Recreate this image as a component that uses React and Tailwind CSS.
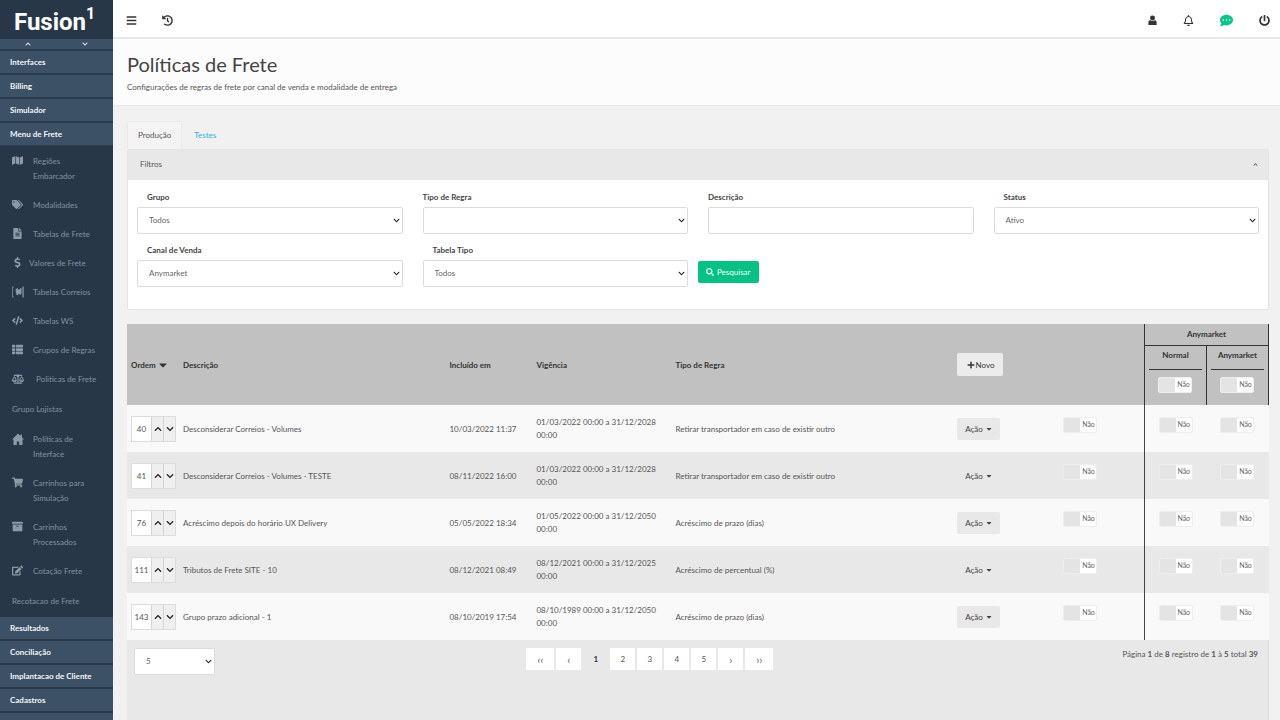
import React, { useState } from "react";
import {
  FaArchive,
  FaBalanceScale,
  FaBars,
  FaCaretDown,
  FaChevronDown,
  FaChevronUp,
  FaCode,
  FaCommentDots,
  FaDollarSign,
  FaEdit,
  FaFileAlt,
  FaHistory,
  FaMap,
  FaPlus,
  FaPowerOff,
  FaRegBell,
  FaSearch,
  FaShoppingCart,
  FaTags,
  FaThList,
} from "react-icons/fa";

const CorreiosIcon = () => (
  <svg viewBox="0 0 12 12" className="h-3 w-3" fill="currentColor">
    <path d="M0 0.5h2v1H1v9h1v1H0z" opacity="0.7" />
    <path d="M3.5 3.5l2-1.5 1.2 2 2-2 0.8 0.5v5l-1.5 1.5-1.2-1.5-1 2-1.5-1z" />
    <path d="M10.4 0.5h1.3v11h-1.3z" />
  </svg>
);

const HomeIcon = () => (
  <svg viewBox="0 0 12 12" className="h-3 w-3" fill="currentColor">
    <path d="M6 0.500L8.500 3V1.500h1.500v3L12 6.600h-1.500V12H7.200V8.500H4.800V12H1.500V6.600H0z" />
  </svg>
);

const UserIcon = () => (
  <svg viewBox="0 0 12 14" className="h-[11px] w-[9px]" fill="currentColor">
    <circle cx="6" cy="3.6" r="3.3" />
    <path d="M0.5 13V9.5C0.5 7.8 1.6 6.8 3 6.8c1.8 1.3 4.200 1.300 6 0 1.400 0 2.500 1 2.500 2.700V13z" />
  </svg>
);

const topItems = ["Interfaces", "Billing", "Simulador", "Menu de Frete"];
const bottomItems = ["Resultados", "Conciliação", "Implantacao de Cliente", "Cadastros"];

const menuFrete = [
  { icon: <FaMap />, text: "Regiões Embarcador" },
  { icon: <FaTags />, text: "Modalidades" },
  { icon: <FaFileAlt />, text: "Tabelas de Frete" },
  { icon: <FaDollarSign />, text: "Valores de Frete", narrow: true },
  { icon: <CorreiosIcon />, text: "Tabelas Correios" },
  { icon: <FaCode />, text: "Tabelas WS" },
  { icon: <FaThList />, text: "Grupos de Regras" },
  { icon: <FaBalanceScale />, text: "Politicas de Frete", wide: true },
  { text: "Grupo Lojistas" },
  { icon: <HomeIcon />, text: "Políticas de Interface" },
  { icon: <FaShoppingCart />, text: "Carrinhos para Simulação" },
  { icon: <FaArchive />, text: "Carrinhos Processados" },
  { icon: <FaEdit />, text: "Cotação Frete" },
  { text: "Recotacao de Frete" },
];

const regras = [
  { ordem: 40, descricao: "Desconsiderar Correios - Volumes", incluido: "10/03/2022 11:37", vigencia: "01/03/2022 00:00 a 31/12/2028 00:00", tipo: "Retirar transportador em caso de existir outro" },
  { ordem: 41, descricao: "Desconsiderar Correios - Volumes - TESTE", incluido: "08/11/2022 16:00", vigencia: "01/03/2022 00:00 a 31/12/2028 00:00", tipo: "Retirar transportador em caso de existir outro" },
  { ordem: 76, descricao: "Acréscimo depois do horário UX Delivery", incluido: "05/05/2022 18:34", vigencia: "01/05/2022 00:00 a 31/12/2050 00:00", tipo: "Acréscimo de prazo (dias)" },
  { ordem: 111, descricao: "Tributos de Frete SITE - 10", incluido: "08/12/2021 08:49", vigencia: "08/12/2021 00:00 a 31/12/2025 00:00", tipo: "Acréscimo de percentual (%)" },
  { ordem: 143, descricao: "Grupo prazo adicional - 1", incluido: "08/10/2019 17:54", vigencia: "08/10/1989 00:00 a 31/12/2050 00:00", tipo: "Acréscimo de prazo (dias)" },
];

const MainItem = ({ text }) => (
  <a
    href="#"
    className="flex h-6 items-center border-b-2 border-[#2a3a4b] bg-[#3d5166] pl-[10px] font-bold text-gray-100"
  >
    {text}
  </a>
);

const SubItem = ({ item }) => {
  if (!item.icon) {
    return (
      <a href="#" className="block py-2 pl-3 leading-[15px]">
        {item.text}
      </a>
    );
  }
  return (
    <a href="#" className="flex py-[7px] pr-3 pl-3 leading-[15px]">
      <span
        className={
          item.narrow
            ? "mt-px w-[17px] shrink-0 text-[11px] text-[#8d99a5]"
            : item.wide
              ? "mt-px w-6 shrink-0 text-[12px] text-[#8d99a5]"
              : "mt-px w-[21px] shrink-0 text-[11px] text-[#8d99a5]"
        }
      >
        {item.icon}
      </span>
      <span>{item.text}</span>
    </a>
  );
};

const Sidebar = () => (
  <aside className="flex w-[113px] shrink-0 flex-col overflow-hidden bg-[#283747] text-[8px] text-[#8391a0]">
    <div className="flex h-[39px] shrink-0 items-center pt-1 pl-[14px] font-[Roboto] text-[24px] font-bold text-white">
      Fusion
      <span className="mb-4 text-[16px] leading-none">1</span>
    </div>
    <div className="flex h-3 shrink-0 items-center justify-around border-b-2 border-[#2a3a4b] bg-[#3d5166] text-[6px] text-gray-200">
      <button type="button" aria-label="Subir menu">
        <FaChevronUp />
      </button>
      <button type="button" aria-label="Descer menu">
        <FaChevronDown />
      </button>
    </div>
    <nav>
      {topItems.map((text) => (
        <MainItem key={text} text={text} />
      ))}
      <div>
        {menuFrete.map((item) => (
          <SubItem key={item.text} item={item} />
        ))}
      </div>
      {bottomItems.map((text) => (
        <MainItem key={text} text={text} />
      ))}
      <div className="h-6 bg-[#3d5166]" />
    </nav>
  </aside>
);

const Topbar = () => (
  <header className="flex h-[39px] shrink-0 items-center justify-between border-b-2 border-[#e9e9e9] bg-white px-[13px] pt-[3px] text-[11px] text-[#333]">
    <div className="flex items-center gap-[25px]">
      <button type="button" aria-label="Menu">
        <FaBars />
      </button>
      <button type="button" aria-label="Histórico">
        <FaHistory />
      </button>
    </div>
    <div className="-mr-[3px] flex items-center gap-[26px]">
      <button type="button" aria-label="Usuário">
        <UserIcon />
      </button>
      <button type="button" aria-label="Notificações">
        <FaRegBell />
      </button>
      <button type="button" aria-label="Mensagens" className="text-[13px] text-[#04c58a]">
        <FaCommentDots />
      </button>
      <button type="button" aria-label="Sair">
        <FaPowerOff />
      </button>
    </div>
  </header>
);

const Field = ({ id, label, flush, children }) => (
  <div className="px-[10px]">
    <label
      htmlFor={id}
      className={
        flush
          ? "block pb-1 leading-3 font-bold text-[#444]"
          : "block pb-1 pl-[10px] leading-3 font-bold text-[#444]"
      }
    >
      {label}
    </label>
    {children}
  </div>
);

const Select = ({ options, ...props }) => (
  <div className="grid items-center">
    <select
      {...props}
      className="col-start-1 row-start-1 h-[27px] w-full appearance-none rounded-xs border border-[#dcdcdc] bg-white pb-[2px] pl-[11px] text-[#666]"
    >
      {options.map((option) => (
        <option key={option}>{option}</option>
      ))}
    </select>
    <FaChevronDown className="pointer-events-none col-start-1 row-start-1 mr-[3px] justify-self-end text-[7px] text-[#222]" />
  </div>
);

const Filtros = () => (
  <section className="rounded-xs border border-[#e4e4e4] bg-white">
    <div className="flex h-[30px] items-center justify-between bg-[#e8e8e8] pr-[10px] pb-[2px] pl-3">
      <h2>Filtros</h2>
      <button type="button" aria-label="Recolher filtros" className="text-[5px]">
        <FaChevronUp />
      </button>
    </div>
    <form className="-mx-px grid grid-cols-4 gap-y-[10px] pt-[11px] pb-[22px]" onSubmit={(e) => e.preventDefault()}>
      <Field id="grupo" label="Grupo">
        <Select id="grupo" options={["Todos"]} />
      </Field>
      <Field id="tipoRegra" label="Tipo de Regra" flush>
        <Select id="tipoRegra" options={[""]} />
      </Field>
      <Field id="descricao" label="Descrição" flush>
        <input
          id="descricao"
          type="text"
          className="h-[27px] w-full rounded-xs border border-[#dcdcdc] bg-white px-2"
        />
      </Field>
      <Field id="status" label="Status">
        <Select id="status" options={["Ativo"]} />
      </Field>
      <Field id="canal" label="Canal de Venda">
        <Select id="canal" options={["Anymarket"]} />
      </Field>
      <Field id="tabelaTipo" label="Tabela Tipo">
        <Select id="tabelaTipo" options={["Todos"]} />
      </Field>
      <div className="pt-[17px]">
        <button
          type="submit"
          className="flex h-[22px] items-center gap-[3px] rounded-xs bg-[#04c184] px-2 text-white"
        >
          <FaSearch className="text-[8px]" />
          Pesquisar
        </button>
      </div>
    </form>
  </section>
);

const Toggle = ({ label }) => {
  const [on, setOn] = useState(false);
  return (
    <label className="inline-flex h-4 w-[34px] items-center overflow-hidden rounded-xs border border-[#eeeeee] bg-white align-middle text-[7px] font-normal text-[#666]">
      <input
        type="checkbox"
        aria-label={label}
        checked={on}
        onChange={() => setOn(!on)}
        className="h-full w-4 shrink-0 appearance-none bg-[#e4e4e4]"
      />
      <span className="flex-1 text-center">{on ? "Sim" : "Não"}</span>
    </label>
  );
};

const Regra = ({ regra }) => (
  <tr className="h-[47px] odd:bg-[#f9f9f9] even:bg-[#e8e8e8]">
    <td className="pl-1">
      <div className="flex h-[26px] w-[45px] border border-[#dcdcdc]">
        <input
          type="text"
          aria-label={`Ordem ${regra.descricao}`}
          defaultValue={regra.ordem}
          className="w-[19px] bg-white text-center"
        />
        <button type="button" aria-label="Subir" className="flex w-3 items-center justify-center border-l border-[#d4d4d4] bg-[#efefef] text-[8px] text-[#222]">
          <FaChevronUp />
        </button>
        <button type="button" aria-label="Descer" className="flex w-3 items-center justify-center border-l border-[#d4d4d4] bg-[#efefef] text-[8px] text-[#222]">
          <FaChevronDown />
        </button>
      </div>
    </td>
    <td className="pl-1">{regra.descricao}</td>
    <td className="pl-1">{regra.incluido}</td>
    <td className="pl-1 leading-[13px]">{regra.vigencia}</td>
    <td className="pl-1">{regra.tipo}</td>
    <td className="pl-1">
      <button type="button" className="flex h-[22px] w-[43px] items-center justify-center gap-[2px] rounded-xs bg-[#e8e8e8] text-[#444]">
        Ação
        <FaCaretDown />
      </button>
    </td>
    <td className="pb-2 pl-1">
      <Toggle label="Ativar regra" />
    </td>
    <td className="border-l border-[#444] pb-2 text-center">
      <Toggle label="Normal" />
    </td>
    <td className="pb-2 text-center">
      <Toggle label="Anymarket" />
    </td>
  </tr>
);

const CanalHeader = ({ text }) => (
  <th className="border-x border-[#333] px-1 align-top">
    <div className="border-b border-[#333] pt-[3px] pb-2 leading-3">{text}</div>
    <div className="pt-[7px]">
      <Toggle label={`${text} todos`} />
    </div>
  </th>
);

const Tabela = () => (
  <table className="w-full table-fixed border-collapse text-left">
    <colgroup>
      <col className="w-[52px]" />
      <col />
      <col className="w-[87px]" />
      <col className="w-[139px]" />
      <col className="w-[282px]" />
      <col className="w-[106px]" />
      <col className="w-[85px]" />
      <col className="w-[62px]" />
      <col className="w-[62px]" />
    </colgroup>
    <thead className="bg-[#c1c1c1] text-[#333]">
      <tr className="h-[21px]">
        <th rowSpan={2} className="pl-1">
          <span className="flex items-center gap-px">
            Ordem
            <FaCaretDown className="text-[12px]" />
          </span>
        </th>
        <th rowSpan={2} className="pl-1">Descrição</th>
        <th rowSpan={2} className="pl-1">Incluído em</th>
        <th rowSpan={2} className="pl-1">Vigência</th>
        <th rowSpan={2} className="pl-1">Tipo de Regra</th>
        <th rowSpan={2} className="pl-1">
          <button type="button" className="flex h-[23px] w-[46px] items-center justify-center gap-px rounded-xs bg-[#ececec] font-normal">
            <FaPlus />
            Novo
          </button>
        </th>
        <th rowSpan={2} />
        <th colSpan={2} className="border-x border-b border-[#333] text-center">Anymarket</th>
      </tr>
      <tr className="h-[60px] text-center">
        <CanalHeader text="Normal" />
        <CanalHeader text="Anymarket" />
      </tr>
    </thead>
    <tbody>
      {regras.map((regra) => (
        <Regra key={regra.ordem} regra={regra} />
      ))}
    </tbody>
  </table>
);

const Paginacao = () => {
  const [page, setPage] = useState(1);
  const side = "h-[22px] w-[25px] bg-white text-[11px] leading-none text-[#666]";
  const edge = "h-[22px] w-7 bg-white text-[11px] leading-none text-[#666]";
  return (
    <div className="flex gap-[2px]">
      <button type="button" className={edge} onClick={() => setPage(1)}>‹‹</button>
      <button type="button" className={side} onClick={() => setPage(Math.max(1, page - 1))}>‹</button>
      {[1, 2, 3, 4, 5].map((n) => (
        <button
          key={n}
          type="button"
          onClick={() => setPage(n)}
          className={n === page ? "h-[22px] w-[25px] font-bold text-[#333]" : "h-[22px] w-[25px] bg-white"}
        >
          {n}
        </button>
      ))}
      <button type="button" className={side} onClick={() => setPage(Math.min(8, page + 1))}>›</button>
      <button type="button" className={edge} onClick={() => setPage(8)}>››</button>
    </div>
  );
};

const App = () => {
  return (
    <div className="flex h-screen overflow-hidden bg-[#f1f1f1] font-[Lato,sans-serif] text-[8px] text-[#555]">
      <Sidebar />
      <main className="flex min-w-0 flex-1 flex-col">
        <Topbar />
        <div className="border-b border-[#e6e6e6] bg-[#fcfcfc] px-[14px] pt-[11px] pb-3">
          <h1 className="text-[20px] leading-7 text-[#444]">Políticas de Frete</h1>
          <p className="pt-[3px] leading-3">Configurações de regras de frete por canal de venda e modalidade de entrega</p>
        </div>
        <div className="flex flex-1 flex-col pt-[15px] pr-[11px] pl-[14px]">
          <div className="flex" role="tablist">
            <button type="button" role="tab" aria-selected="true" className="h-7 rounded-t-xs border border-b-0 border-[#e9e9e9] bg-[#f4f4f4] px-[10px] pb-px">
              Produção
            </button>
            <button type="button" role="tab" aria-selected="false" className="h-7 px-3 text-[#2fb5d2]">
              Testes
            </button>
          </div>
          <Filtros />
          <div className="mt-[14px] flex flex-1 flex-col bg-[#e8e8e8]">
            <Tabela />
            <div className="flex flex-1 items-start border-r border-[#dcdcdc] pt-2">
              <div className="w-[35%] pl-[7px]">
                <div className="w-[81px]">
                  <Select aria-label="Registros por página" options={["5"]} />
                </div>
              </div>
              <Paginacao />
              <p className="ml-auto pr-[10px] leading-3">
                Página <b>1</b> de <b>8</b> registro de <b>1</b> à <b>5</b> total <b>39</b>
              </p>
            </div>
          </div>
        </div>
      </main>
    </div>
  );
};

export default App;
